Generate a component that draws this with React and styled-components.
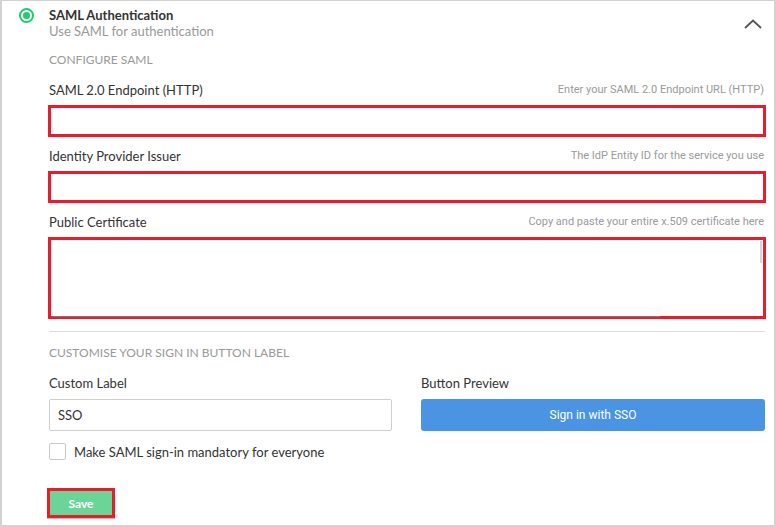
import React from 'react'
import styled, { createGlobalStyle } from 'styled-components'

const GlobalStyle = createGlobalStyle`
  html, body {
    margin: 0;
    padding: 0;
    background: #fff;
  }
  * {
    box-sizing: border-box;
  }
`

const red = '#e81c2a'

const Frame = styled.div`
  width: 776px;
  height: 527px;
  border: 2px solid #d2d2d2;
  border-top-width: 1px;
  background: #fff;
  font-family: Lato, "Liberation Sans", sans-serif;
  color: #333;
  overflow: hidden;
`

const Header = styled.div`
  display: flex;
  align-items: flex-start;
  padding: 6px 10px 0 17px;
  height: 38px;
`

const Radio = styled.span`
  width: 15px;
  height: 15px;
  margin-top: 1px;
  border-radius: 50%;
  border: 2px solid #1fcb6b;
  padding: 2px;
  display: flex;
  flex-shrink: 0;
  &::after {
    content: '';
    flex: 1;
    border-radius: 50%;
    background: #1fcb6b;
  }
`

const TitleBlock = styled.div`
  margin-left: 15px;
  flex: 1;
`

const Title = styled.div`
  font-size: 13px;
  font-weight: 700;
  line-height: 16px;
  color: #333;
`

const Subtitle = styled.div`
  font-size: 13px;
  line-height: 16px;
  color: #999;
`

const Chevron = styled.svg`
  margin-top: 12px;
  margin-right: 2px;
`

const Body = styled.div`
  padding: 0 9px 0 47px;
  display: flex;
  flex-direction: column;
`

const SectionHeading = styled.div`
  font-size: 12px;
  line-height: 16px;
  color: #999;
  text-transform: uppercase;
  margin-top: ${(p) => p.$top}px;
`

const LabelRow = styled.div`
  display: flex;
  justify-content: space-between;
  align-items: center;
  height: 16px;
  margin-top: ${(p) => p.$top}px;
`

const Label = styled.label`
  font-size: 13px;
  line-height: 16px;
  color: #333;
`

const Hint = styled.span`
  font-family: Roboto, "Liberation Sans", sans-serif;
  font-size: 11px;
  line-height: 16px;
  color: #9a9a9a;
  padding-right: 1px;
`

const MarkedInput = styled.div`
  margin-top: ${(p) => p.$top}px;
  margin-left: -1px;
  margin-right: -1px;
  height: ${(p) => p.$height}px;
  border: 3px solid ${red};
  background: #fff;
  position: relative;
`

const TextScroll = styled.span`
  position: absolute;
  right: 1px;
  top: 1px;
  width: 2px;
  height: 22px;
  background: #d6d6d6;
`

const TextBottom = styled.span`
  position: absolute;
  left: 1px;
  bottom: -1px;
  width: 608px;
  height: 1px;
  background: #7a7a7a;
`

const Divider = styled.hr`
  margin: 12px 0 0 0;
  border: 0;
  border-top: 1px solid #dcdcdc;
  height: 0;
`

const TwoCols = styled.div`
  display: grid;
  grid-template-columns: 343px 1fr;
  column-gap: 29px;
  margin-top: 14px;
`

const Col = styled.div`
  display: flex;
  flex-direction: column;
`

const FieldLabel = styled.div`
  font-size: 13px;
  line-height: 16px;
  color: #333;
  margin-bottom: 8px;
`

const TextInput = styled.div`
  height: 32px;
  border: 1px solid #cfcfcf;
  border-radius: 2px;
  padding: 0 8px;
  display: flex;
  align-items: center;
  font-size: 13px;
  color: #333;
`

const PreviewButton = styled.div`
  height: 32px;
  border-radius: 3px;
  background: #4a94e3;
  color: #fff;
  font-family: Roboto, "Liberation Sans", sans-serif;
  font-size: 12px;
  display: flex;
  align-items: center;
  justify-content: center;
`

const CheckRow = styled.div`
  display: flex;
  align-items: center;
  margin-top: 12px;
  gap: 8px;
`

const Checkbox = styled.span`
  width: 17px;
  height: 17px;
  border: 1px solid #c8c8c8;
  border-radius: 2px;
`

const CheckText = styled.span`
  font-size: 13px;
  color: #333;
`

const SaveWrap = styled.div`
  margin-top: 28px;
  margin-left: -2px;
  align-self: flex-start;
  border: 3px solid ${red};
  box-shadow: 0 1px 0 #bdbdbd;
`

const SaveButton = styled.div`
  width: 62px;
  height: 24px;
  background: #6bd597;
  color: #fff;
  font-size: 12px;
  font-weight: 700;
  display: flex;
  align-items: center;
  justify-content: center;
`

function Field ({ label, hint, top, height, children }) {
  return (
    <>
      <LabelRow $top={top}>
        <Label>{label}</Label>
        <Hint>{hint}</Hint>
      </LabelRow>
      <MarkedInput $top={7} $height={height}>{children}</MarkedInput>
    </>
  )
}

export default function App () {
  return (
    <Frame>
      <GlobalStyle />
      <Header>
        <Radio />
        <TitleBlock>
          <Title>SAML Authentication</Title>
          <Subtitle>Use SAML for authentication</Subtitle>
        </TitleBlock>
        <Chevron width="18" height="10" viewBox="0 0 18 10">
          <path d="M1 9 L9 1.5 L17 9" fill="none" stroke="#555" strokeWidth="1.8" />
        </Chevron>
      </Header>
      <Body>
        <SectionHeading $top={13}>Configure SAML</SectionHeading>
        <Field
          top={14}
          height={32}
          label="SAML 2.0 Endpoint (HTTP)"
          hint="Enter your SAML 2.0 Endpoint URL (HTTP)"
        />
        <Field
          top={11}
          height={32}
          label="Identity Provider Issuer"
          hint="The IdP Entity ID for the service you use"
        />
        <Field
          top={11}
          height={82}
          label="Public Certificate"
          hint="Copy and paste your entire x.509 certificate here"
        >
          <TextScroll />
          <TextBottom />
        </Field>
        <Divider />
        <SectionHeading $top={13}>Customise your sign in button label</SectionHeading>
        <TwoCols>
          <Col>
            <FieldLabel>Custom Label</FieldLabel>
            <TextInput>SSO</TextInput>
          </Col>
          <Col>
            <FieldLabel>Button Preview</FieldLabel>
            <PreviewButton>Sign in with SSO</PreviewButton>
          </Col>
        </TwoCols>
        <CheckRow>
          <Checkbox />
          <CheckText>Make SAML sign-in mandatory for everyone</CheckText>
        </CheckRow>
        <SaveWrap>
          <SaveButton>Save</SaveButton>
        </SaveWrap>
      </Body>
    </Frame>
  )
}
